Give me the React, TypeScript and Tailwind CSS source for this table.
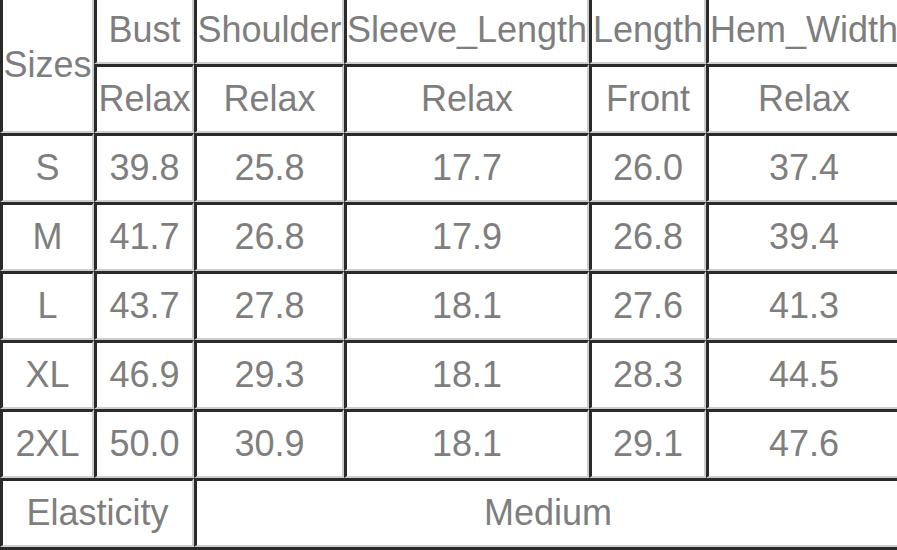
import React from "react";

const cell =
  "flex items-center justify-center border-t-[3px] border-l-[3px] border-t-[#2a2a2a] border-l-[#2a2a2a] border-b-2 border-r-2 border-b-[#cdcdcd] border-r-[#cdcdcd] bg-white text-[36px] leading-none text-[#7e7e7e] whitespace-nowrap overflow-hidden";

const rows: string[][] = [
  ["S", "39.8", "25.8", "17.7", "26.0", "37.4"],
  ["M", "41.7", "26.8", "17.9", "26.8", "39.4"],
  ["L", "43.7", "27.8", "18.1", "27.6", "41.3"],
  ["XL", "46.9", "29.3", "18.1", "28.3", "44.5"],
  ["2XL", "50.0", "30.9", "18.1", "29.1", "47.6"],
];

export default function App() {
  return (
    <div
      className="w-[897px] h-[550px] overflow-hidden bg-white"
      style={{ fontFamily: '"Liberation Sans", Arial, sans-serif' }}
    >
      <div className="-mt-[5px] w-[901px] grid grid-cols-[94px_100px_150px_245px_117px_195px] auto-rows-[69px] border-b-[3px] border-b-[#2a2a2a]">
        <div className={`${cell} row-span-2`}>Sizes</div>
        <div className={cell}>Bust</div>
        <div className={cell}>Shoulder</div>
        <div className={cell}>Sleeve_Length</div>
        <div className={cell}>Length</div>
        <div className={cell}>Hem_Width</div>
        <div className={cell}>Relax</div>
        <div className={cell}>Relax</div>
        <div className={cell}>Relax</div>
        <div className={cell}>Front</div>
        <div className={cell}>Relax</div>
        {rows.map((r) =>
          r.map((v, i) => (
            <div key={r[0] + i} className={cell}>
              {v}
            </div>
          ))
        )}
        <div className={`${cell} col-span-2`}>Elasticity</div>
        <div className={`${cell} col-span-4`}>Medium</div>
      </div>
    </div>
  );
}
